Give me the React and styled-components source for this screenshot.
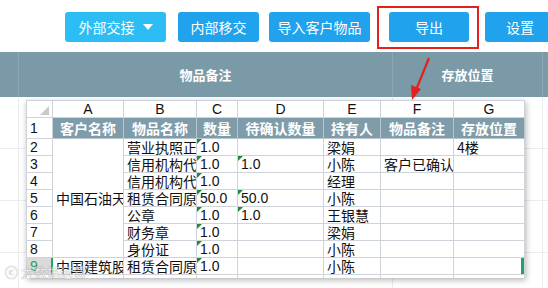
import React from "react";
import styled, { createGlobalStyle } from "styled-components";

const GlobalStyle = createGlobalStyle`
  html, body {
    margin: 0;
    padding: 0;
    background: #fff;
    overflow: hidden;
  }
  body {
    font-family: "Liberation Sans", "Noto Sans CJK SC", sans-serif;
  }
`;

const Page = styled.div`
  position: relative;
  width: 548px;
  height: 288px;
  overflow: hidden;
  background: #fff;
`;

const Toolbar = styled.div`
  display: flex;
  align-items: flex-start;
  height: 52px;
  box-sizing: border-box;
  padding: 12px 0 0 65px;
`;

const ActionButton = styled.div`
  flex: none;
  display: flex;
  align-items: center;
  justify-content: center;
  gap: 8px;
  width: ${p => p.$width}px;
  height: 30px;
  margin-left: ${p => p.$gap || 0}px;
  border-radius: 3px;
  background: ${p => (p.$light ? "#2bbdf4" : "#20a2ed")};
  color: #fff;
  font-size: 14px;
  font-family: "Noto Sans CJK SC", sans-serif;
`;

const Caret = styled.span`
  width: 0;
  height: 0;
  border-left: 5px solid transparent;
  border-right: 5px solid transparent;
  border-top: 6px solid #fff;
`;

const HeaderBar = styled.div`
  display: grid;
  grid-template-columns: 18px 374px 150px 6px;
  height: 45px;
  background: #7a9aa8;
`;

const HeaderCell = styled.div`
  display: flex;
  align-items: center;
  justify-content: center;
  border-left: ${p => (p.$first ? "none" : "1px solid #8aa8b5")};
  color: #fff;
  font-weight: bold;
  font-size: 13px;
  font-family: "Noto Sans CJK SC", sans-serif;
`;

const Backdrop = styled.div`
  display: grid;
  grid-template-columns: 18px 374px 150px 6px;
  grid-auto-rows: 52px;
`;

const BackCell = styled.div`
  border-left: ${p => (p.$first ? "none" : "1px solid #ececec")};
  border-bottom: 1px solid #ececec;
`;

const Sheet = styled.div`
  position: absolute;
  left: 26px;
  top: 100px;
  width: 499px;
  height: 178px;
  overflow: hidden;
  background: #fff;
  box-shadow: 1px 2px 6px rgba(0, 0, 0, 0.3);
`;

const Grid = styled.table`
  table-layout: fixed;
  border-collapse: collapse;
  width: 498px;
  font-size: 14px;
  font-family: "Liberation Sans", "Noto Sans CJK SC", sans-serif;
  color: #111;
`;

const LetterCell = styled.td`
  height: 16px;
  padding: 0;
  border: 1px solid #cfd3da;
  text-align: center;
  line-height: 16px;
  background: #fff;
`;

const Corner = styled(LetterCell)`
  position: relative;
  &::after {
    content: "";
    position: absolute;
    right: 3px;
    bottom: 2px;
    border-left: 9px solid transparent;
    border-bottom: 9px solid #c9c9c9;
  }
`;

const TitleCell = styled.td`
  height: 20px;
  padding: 0;
  border: 1px solid #b9c6ce;
  background: #7f9cab;
  color: #fff;
  font-weight: bold;
  text-align: center;
  font-family: "Noto Sans CJK SC", sans-serif;
  white-space: nowrap;
  overflow: hidden;
`;

const RowNum = styled.td`
  position: relative;
  height: 16px;
  padding: 0 0 0 3px;
  border: 1px solid #cfd3da;
  background: ${p => (p.$active ? "#dadada" : "#fff")};
  color: ${p => (p.$active ? "#2a9b68" : "#111")};
  line-height: 16px;
  &::after {
    content: "";
    display: ${p => (p.$active ? "block" : "none")};
    position: absolute;
    right: -1px;
    top: 0;
    bottom: 0;
    width: 2px;
    background: #21a366;
  }
`;

const Cell = styled.td`
  position: relative;
  height: 16px;
  padding: 0 0 0 3px;
  border: 1px solid #cfd3da;
  white-space: nowrap;
  overflow: hidden;
  line-height: 16px;
  vertical-align: middle;
  font-family: ${p =>
    p.$num ? '"Liberation Sans", sans-serif' : '"Noto Sans CJK SC", sans-serif'};
  &::before {
    content: "";
    display: ${p => (p.$flag ? "block" : "none")};
    position: absolute;
    left: 0;
    top: 0;
    border-top: 5px solid #1d8a3c;
    border-right: 5px solid transparent;
  }
  &::after {
    content: "";
    display: ${p => (p.$selEdge ? "block" : "none")};
    position: absolute;
    right: 0;
    top: 0;
    bottom: 0;
    width: 3px;
    background: #21a366;
  }
`;

const RedFrame = styled.div`
  position: absolute;
  left: 377px;
  top: 6px;
  width: 102px;
  height: 43px;
  box-sizing: border-box;
  border: 2px solid #e3201c;
`;

const Arrow = styled.svg`
  position: absolute;
  left: 400px;
  top: 52px;
`;

const Watermark = styled.div`
  position: absolute;
  left: 5px;
  top: 262px;
  font-size: 13px;
  font-family: "Noto Sans CJK SC", sans-serif;
  color: rgba(255, 255, 255, 0.9);
  text-shadow: 0 0 1px #888, 0 0 1px #888;
  opacity: 0.7;
`;

const widths = [26, 71, 73, 41, 86, 57, 73, 71];
const letters = ["A", "B", "C", "D", "E", "F", "G"];
const titles = ["客户名称", "物品名称", "数量", "待确认数量", "持有人", "物品备注", "存放位置"];

const rows = [
  { n: 2, b: "营业执照正本", c: "1.0", d: "", e: "梁娟", f: "", g: "4楼" },
  { n: 3, b: "信用机构代码证", c: "1.0", d: "1.0", e: "小陈", f: "客户已确认", g: "" },
  { n: 4, b: "信用机构代码证", c: "1.0", d: "", e: "经理", f: "", g: "" },
  { n: 5, b: "租赁合同原件", c: "50.0", d: "50.0", e: "小陈", f: "", g: "" },
  { n: 6, b: "公章", c: "1.0", d: "1.0", e: "王银慧", f: "", g: "" },
  { n: 7, b: "财务章", c: "1.0", d: "", e: "梁娟", f: "", g: "" },
  { n: 8, b: "身份证", c: "1.0", d: "", e: "小陈", f: "", g: "" },
  { n: 9, a: "中国建筑股份有限公司", b: "租赁合同原件", c: "1.0", d: "", e: "小陈", f: "", g: "", active: true }
];

export default function App() {
  return (
    <Page>
      <GlobalStyle />
      <Toolbar>
        <ActionButton $width={101} $light>
          外部交接 <Caret />
        </ActionButton>
        <ActionButton $width={81} $gap={12}>内部移交</ActionButton>
        <ActionButton $width={101} $gap={10}>导入客户物品</ActionButton>
        <ActionButton $width={80} $gap={19}>导出</ActionButton>
        <ActionButton $width={70} $gap={16}>设置</ActionButton>
      </Toolbar>
      <HeaderBar>
        <HeaderCell $first />
        <HeaderCell>物品备注</HeaderCell>
        <HeaderCell>存放位置</HeaderCell>
        <HeaderCell />
      </HeaderBar>
      <Backdrop>
        {Array.from({ length: 4 }).map((_, r) =>
          [0, 1, 2, 3].map(c => <BackCell key={`${r}-${c}`} $first={c === 0} />)
        )}
      </Backdrop>

      <Sheet>
        <Grid>
          <colgroup>
            {widths.map((w, i) => (
              <col key={i} style={{ width: w }} />
            ))}
          </colgroup>
          <tbody>
            <tr>
              <Corner />
              {letters.map(l => (
                <LetterCell key={l}>{l}</LetterCell>
              ))}
            </tr>
            <tr>
              <RowNum>1</RowNum>
              {titles.map(t => (
                <TitleCell key={t}>{t}</TitleCell>
              ))}
            </tr>
            {rows.map(r => (
              <tr key={r.n}>
                <RowNum $active={r.active}>{r.n}</RowNum>
                {r.n === 2 && <Cell rowSpan={7}>中国石油天然气股份</Cell>}
                {r.n === 9 && <Cell>{r.a}</Cell>}
                <Cell>{r.b}</Cell>
                <Cell $num $flag>{r.c}</Cell>
                <Cell $num $flag={!!r.d}>{r.d}</Cell>
                <Cell>{r.e}</Cell>
                <Cell>{r.f}</Cell>
                <Cell $selEdge={r.active}>{r.g}</Cell>
              </tr>
            ))}
            <tr>
              <RowNum />
              <Cell /><Cell /><Cell /><Cell /><Cell /><Cell /><Cell />
            </tr>
          </tbody>
        </Grid>
      </Sheet>

      <RedFrame />
      <Arrow width="40" height="52" viewBox="0 0 40 52">
        <line x1="29" y1="6" x2="16" y2="38" stroke="#e3201c" strokeWidth="2.2" />
        <polygon points="12,48 11,33 21,37" fill="#e3201c" />
      </Arrow>
      <Watermark>ⓒ 大数据运营</Watermark>
    </Page>
  );
}
